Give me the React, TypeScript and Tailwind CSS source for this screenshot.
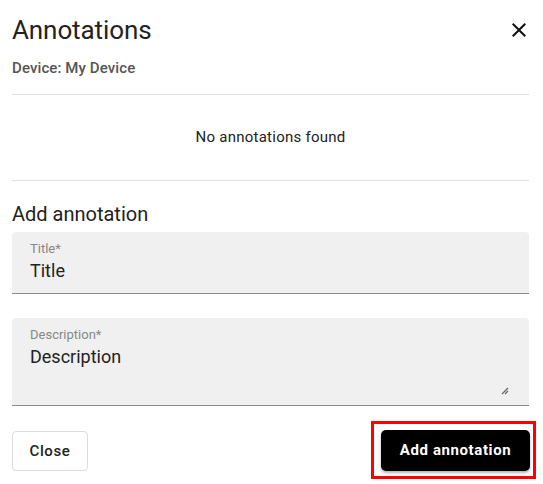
import React from "react";

export default function App() {
  return (
    <div className="w-[543px] h-[484px] bg-white overflow-hidden" style={{ fontFamily: "Roboto, 'Noto Sans', sans-serif" }}>
      <div className="pl-3 w-[529px]">
        <div className="flex items-start justify-between pt-[14px]">
          <h1 className="text-[26px] leading-[32px] text-[#222] font-normal tracking-[-0.1px]">Annotations</h1>
          <button className="mt-[4px] mr-[-2px] w-[24px] h-[24px] flex items-center justify-center text-[#111]">
            <svg viewBox="0 0 24 24" width="24" height="24" fill="currentColor">
              <path d="M19 6.41 17.59 5 12 10.59 6.41 5 5 6.41 10.59 12 5 17.59 6.41 19 12 13.41 17.59 19 19 17.59 13.41 12z" />
            </svg>
          </button>
        </div>
        <div className="mt-[12px] text-[15px] leading-[20px] font-medium text-[#555] tracking-[0.1px]">Device: My Device</div>
        <div className="mt-[16px] h-px bg-[#e0e0e0]" />
        <div className="h-[85px] flex items-center justify-center text-[15px] tracking-[0.25px] text-[#222]">No annotations found</div>
        <div className="h-px bg-[#e0e0e0]" />
        <div className="mt-[19px] text-[20px] leading-[28px] text-[#222]">Add annotation</div>
        <div className="mt-[4px] bg-[#f0f0f0] rounded-t-[4px] border-b border-[#8a8a8a] h-[62px] pl-[18px] pt-[9px]">
          <div className="text-[13px] leading-[16px] text-[#888]">Title*</div>
          <div className="text-[18px] leading-[24px] text-[#222] mt-[2px]">Title</div>
        </div>
        <div className="mt-[24px] bg-[#f0f0f0] rounded-t-[4px] border-b border-[#8a8a8a] h-[88px] pl-[18px] pt-[9px] relative">
          <div className="text-[13px] leading-[16px] text-[#888]">Description*</div>
          <div className="text-[18px] leading-[24px] text-[#222] mt-[2px]">Description</div>
          <svg className="absolute right-[20px] bottom-[10px]" width="8" height="8" viewBox="0 0 8 8">
            <path d="M1 7 L7 1 M4 7 L7 4" stroke="#666" strokeWidth="1.2" />
          </svg>
        </div>
        <div className="mt-[25px] flex items-start justify-between h-[40px]">
          <button className="w-[76px] h-[40px] border border-[#dcdcdc] rounded-[4px] text-[15px] tracking-[0.6px] font-medium text-[#222] bg-white">Close</button>
          <div className="border-[3px] border-[#ff0000] pl-[7px] pr-[3px] pt-[6px] pb-[5px] mr-[-7px] mt-[-10px]">
            <button className="block w-[149px] h-[41px] bg-black rounded-[5px] text-white text-[15px] tracking-[0.6px] font-bold shadow-[0_2px_3px_rgba(0,0,0,0.3)]">Add annotation</button>
          </div>
        </div>
      </div>
    </div>
  );
}
